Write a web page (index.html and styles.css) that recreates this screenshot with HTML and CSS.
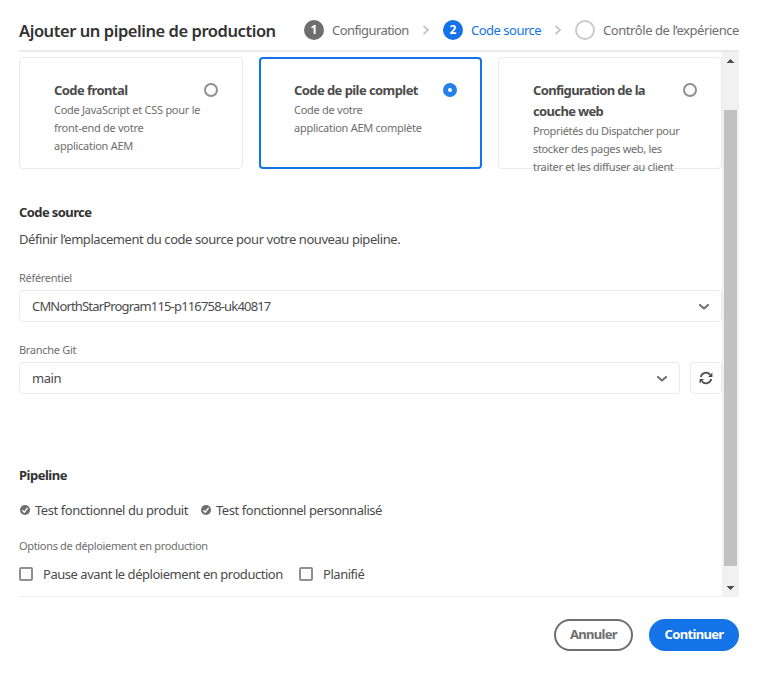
FILE: index.html
```html
<!DOCTYPE html>
<html lang="fr">
<head>
<meta charset="utf-8">
<title>Ajouter un pipeline de production</title>
<link rel="stylesheet" href="styles.css">
</head>
<body>
<div class="dialog">
  <header class="head">
    <h1>Ajouter un pipeline de production</h1>
    <ol class="steps">
      <li class="step done"><span class="dot">1</span><span class="name n1">Configuration</span></li>
      <li class="sep"><svg width="8" height="12" viewBox="0 0 8 12"><path d="M1.5 1.8 6 6 1.5 10.2"/></svg></li>
      <li class="step current"><span class="dot">2</span><span class="name n2">Code source</span></li>
      <li class="sep"><svg width="8" height="12" viewBox="0 0 8 12"><path d="M1.5 1.8 6 6 1.5 10.2"/></svg></li>
      <li class="step todo"><span class="dot"></span><span class="name n3">Contrôle de l’expérience</span></li>
    </ol>
  </header>
  <div class="body">
    <main class="content">
      <div class="cards">
        <section class="card">
          <div class="text"><h2>Code frontal</h2><p>Code JavaScript et CSS pour le<br>front-end de votre<br>application AEM</p></div>
          <span class="radio"></span>
        </section>
        <section class="card selected">
          <div class="text"><h2>Code de pile complet</h2><p>Code de votre<br>application AEM complète</p></div>
          <span class="radio"></span>
        </section>
        <section class="card web">
          <div class="text"><h2>Configuration de la<br>couche web</h2><p>Propriétés du Dispatcher pour<br>stocker des pages web, les<br>traiter et les diffuser au client</p></div>
          <span class="radio"></span>
        </section>
      </div>
      <h3>Code source</h3>
      <p class="intro">Définir l’emplacement du code source pour votre nouveau pipeline.</p>
      <div class="label">Référentiel</div>
      <div class="select"><span class="repo">CMNorthStarProgram115-p116758-uk40817</span><svg class="chev" width="12" height="8" viewBox="0 0 12 8"><path d="M1.9 1.9 6 5.6l4.1-3.7"/></svg></div>
      <div class="label second">Branche Git</div>
      <div class="row">
        <div class="select"><span>main</span><svg class="chev" width="12" height="8" viewBox="0 0 12 8"><path d="M1.9 1.9 6 5.6l4.1-3.7"/></svg></div>
        <div class="refresh"><svg width="14" height="14" viewBox="0 0 14 14"><path class="arc" d="M1.8 6A5.3 5.3 0 0 1 11 3.6M12.2 8A5.3 5.3 0 0 1 3 10.4"/><path class="tip" d="M13.4 1.6v4.4H9zM.6 12.4V8H5z"/></svg></div>
      </div>
      <h3 class="pipe">Pipeline</h3>
      <div class="tests">
        <span class="test"><svg width="10" height="10" viewBox="0 0 10 10"><circle cx="5" cy="5" r="5"/><path d="M2.4 5.2 4.3 7.2 7.6 2.9"/></svg>Test fonctionnel du produit</span>
        <span class="test"><svg width="10" height="10" viewBox="0 0 10 10"><circle cx="5" cy="5" r="5"/><path d="M2.4 5.2 4.3 7.2 7.6 2.9"/></svg>Test fonctionnel personnalisé</span>
      </div>
      <div class="label options">Options de déploiement en production</div>
      <div class="checks">
        <span class="check"><i></i>Pause avant le déploiement en production</span>
        <span class="check"><i></i>Planifié</span>
      </div>
      <div class="label next">Options de déploiement en production</div>
    </main>
    <div class="scrollbar">
      <svg width="17" height="17" viewBox="0 0 17 17"><path d="M5 11h7L8.5 7z"/></svg>
      <div class="thumb"></div>
      <svg width="17" height="17" viewBox="0 0 17 17"><path d="M5 6h7L8.5 10z"/></svg>
    </div>
  </div>
  <footer class="foot">
    <span class="btn cancel">Annuler</span>
    <span class="btn primary">Continuer</span>
  </footer>
</div>
</body>
</html>
```
FILE: styles.css
```css
* { box-sizing: border-box; }
body { margin: 0; background: #fff; overflow: hidden; font: 13px/20px "Noto Sans", sans-serif; letter-spacing: -.45px; color: #4b4b4b; white-space: nowrap; }
h1, h2, h3, p, ol { margin: 0; padding: 0; }
svg { flex: none; }
.dialog { width: 774px; height: 682px; padding: 0 35px 0 19px; display: flex; flex-direction: column; }
.head { height: 52px; padding-top: 10px; border-bottom: 2px solid #eaeaea; display: flex; align-items: center; justify-content: space-between; }
h1 { padding-top: 2px; font-size: 16.5px; font-weight: 600; line-height: 22px; letter-spacing: -.44px; color: #323232; width: 270px; }
.steps { list-style: none; display: flex; align-items: center; }
.step { display: flex; align-items: center; color: #6e6e6e; }
.dot { width: 20px; height: 20px; border-radius: 50%; margin-right: 8px; background: #6e6e6e; color: #fff; font-weight: 700; font-size: 12px; line-height: 19px; text-align: center; letter-spacing: 0; }
.name { display: block; }
.n1 { width: 77px; letter-spacing: -.58px; }
.n2 { width: 70px; letter-spacing: -.5px; }
.n3 { width: 136px; letter-spacing: -.43px; }
.current { color: #1473e6; }
.current .dot { background: #1473e6; }
.todo .dot { background: #fff; border: 2px solid #cacaca; }
.sep { width: 34px; height: 12px; padding-left: 13px; display: flex; }
.sep svg { fill: none; stroke: #c6c6c6; stroke-width: 1.8; }
.body { height: 545px; display: flex; overflow: hidden; background: linear-gradient(#eee, #eee) bottom / 100% 1px no-repeat; }
.content { width: 703px; height: 545px; padding-top: 5px; }
.cards { display: grid; grid-template-columns: 224px 223px 224px; gap: 16px; }
.card { height: 112px; padding: 22px 24px 0 34px; border: 1px solid #eaeaea; border-radius: 4px; display: flex; justify-content: space-between; }
.card.selected { border: 2px solid #1473e6; padding: 21px 23px 0 33px; }
.card h2 { font-size: 13px; font-weight: 700; line-height: 21px; letter-spacing: -.57px; color: #4b4b4b; }
.card p { font-size: 11px; line-height: 18px; letter-spacing: -.27px; color: #6e6e6e; }
.card.web h2 { letter-spacing: -.65px; }
.card.web p { letter-spacing: -.34px; }
.text { width: 0; }
.radio { width: 14px; height: 14px; flex: none; margin-top: 3px; border: 2px solid #909090; border-radius: 50%; }
.selected .radio { border: 5px solid #2680eb; }
h3 { margin-top: 33px; font-size: 13px; font-weight: 700; line-height: 20px; letter-spacing: -.6px; color: #323232; }
.intro { margin-top: 7px; letter-spacing: -.44px; }
.label { font-size: 11px; line-height: 16px; letter-spacing: -.3px; color: #6e6e6e; margin-top: 21px; }
.select { height: 32px; margin-top: 4px; padding: 0 11px 0 12px; border: 1px solid #eaeaea; border-radius: 4px; display: flex; align-items: center; justify-content: space-between; flex: 1; }
.repo { letter-spacing: -.83px; }
.chev { margin-top: 1px; fill: none; stroke: #6e6e6e; stroke-width: 2; stroke-linecap: round; stroke-linejoin: round; }
.label.second { margin-top: 20px; }
.row { display: flex; gap: 10px; }
.refresh { width: 32px; height: 32px; margin-top: 4px; border: 1px solid #eaeaea; border-radius: 4px; display: flex; align-items: center; justify-content: center; }
.arc { fill: none; stroke: #4b4b4b; stroke-width: 1.7; }
.tip { fill: #4b4b4b; }
.pipe { margin-top: 71px; letter-spacing: -.5px; }
.tests { margin-top: 15px; display: flex; gap: 12px; }
.test { width: 169px; height: 20px; display: flex; align-items: center; padding-left: 1px; }
.test svg { margin-right: 5px; fill: #6e6e6e; }
.test path { fill: none; stroke: #fff; stroke-width: 1.3; }
.options { margin-top: 18px; }
.label.options, .label.next { letter-spacing: -.33px; }
.checks { margin-top: 10px; display: flex; gap: 16px; }
.check { min-width: 264px; height: 20px; display: flex; align-items: center; letter-spacing: -.46px; }
.check i { width: 14px; height: 14px; margin-right: 10px; border: 2px solid #909090; border-radius: 2px; }
.label.next { margin-top: 9px; color: #9a9a9a; }
.scrollbar { width: 17px; height: 545px; background: #f1f1f1; display: flex; flex-direction: column; align-items: center; justify-content: space-between; }
.scrollbar svg { fill: #505050; display: block; shape-rendering: crispEdges; }
.thumb { width: 13px; height: 456px; margin-top: 28px; margin-bottom: 1px; flex: none; background: #c1c1c1; }
.foot { padding-top: 22px; display: flex; justify-content: flex-end; gap: 16px; }
.btn { width: 79px; height: 32px; border-radius: 16px; display: flex; align-items: center; justify-content: center; padding-bottom: 2px; font-weight: 700; letter-spacing: -.68px; }
.cancel { border: 2px solid #6e6e6e; color: #6e6e6e; }
.primary { width: 90px; background: #1473e6; color: #fff; }
```
